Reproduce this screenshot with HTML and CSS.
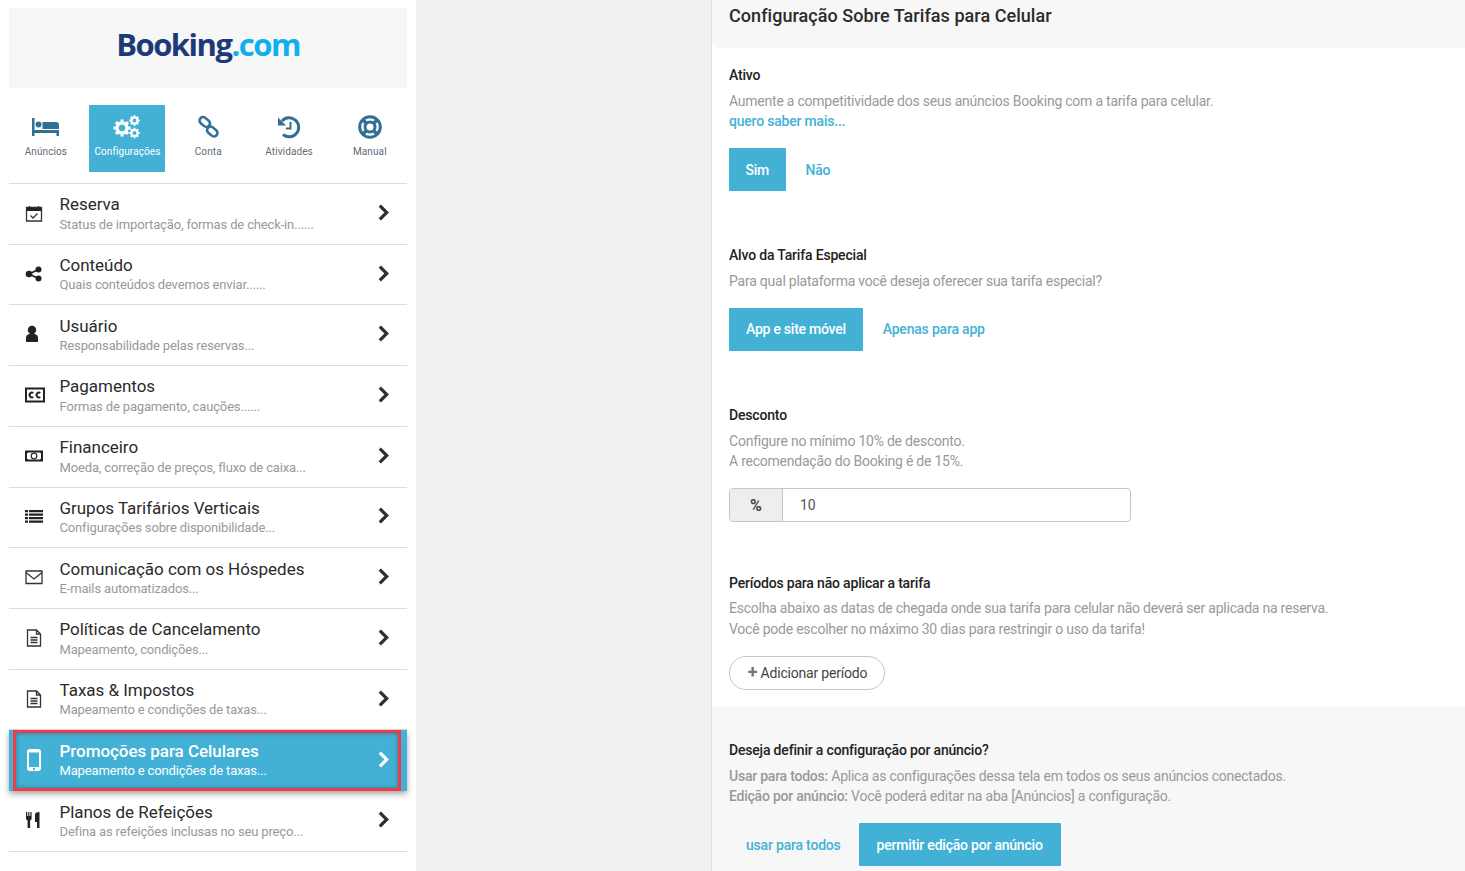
FILE: index.html
```html
<!DOCTYPE html>
<html lang="pt">
<head>
<meta charset="utf-8">
<title>Booking.com</title>
<link rel="stylesheet" href="styles.css">
</head>
<body>
<div class="page">
<aside class="sidebar">
  <div class="logo"><span class="logo-dark">Booking</span><span class="logo-light">.com</span></div>
  <nav class="tabs">
    <a class="tab"><svg class="tab-icon" viewBox="0 0 28 24"><path d="M0 3h2.500v12H27v6h-2.500v-3h-22v3H0z"/><circle cx="6.500" cy="9.500" r="3"/><path d="M10.500 7H24a3 3 0 0 1 3 3v4H10.500z"/></svg><span>Anúncios</span></a>
    <a class="tab tab-active"><svg class="tab-icon" viewBox="0 0 28 24"><g transform="translate(9 13)"><circle class="ring-w" r="5"/><path class="teeth-w" d="M0-8.500V8.500M-8.500 0H8.500M-6-6L6 6M-6 6L6-6"/></g><g transform="translate(21.500 5.500)"><circle class="ring-w ring-s" r="3"/><path class="teeth-w teeth-s" d="M0-5.300V5.300M-5.300 0H5.300M-3.700-3.700L3.700 3.700M-3.700 3.700L3.700-3.700"/></g><g transform="translate(21.500 18)"><circle class="ring-w ring-s" r="3"/><path class="teeth-w teeth-s" d="M0-5.300V5.300M-5.300 0H5.300M-3.700-3.700L3.700 3.700M-3.700 3.700L3.700-3.700"/></g></svg><span>Configurações</span></a>
    <a class="tab"><svg class="tab-icon" viewBox="0 0 28 24"><rect class="stroke-link" x="5" y="3.500" width="11.500" height="7" rx="3.500" transform="rotate(40 10.750 7)"/><rect class="stroke-link" x="12.500" y="13" width="11.500" height="7" rx="3.500" transform="rotate(40 18.250 16.500)"/></svg><span>Conta</span></a>
    <a class="tab"><svg class="tab-icon" viewBox="0 0 28 24"><path class="stroke-blue" d="M7 6A9.500 9.500 0 1 1 8 19.500"/><path d="M3 2.500l8 8H3z"/><path class="stroke-thin" d="M15.500 7v6.500H11"/></svg><span>Atividades</span></a>
    <a class="tab"><svg class="tab-icon" viewBox="0 0 28 24"><circle class="stroke-blue" cx="14" cy="12" r="10.300"/><circle class="stroke-blue" cx="14" cy="12" r="5"/><path class="stroke-wide" d="M6.500 4.500L10.500 8.500M21.500 4.500L17.500 8.500M6.500 19.500L10.500 15.500M21.500 19.500L17.500 15.500"/></svg><span>Manual</span></a>
  </nav>
  <ul class="menu">
    <li class="row"><svg class="row-icon" viewBox="0 0 18 18"><path class="outline" d="M1.500 3.500h15v13.500h-15zM4.500 2v3M13.500 2v3M5.500 11.500l2.500 2.500 4.500-4.500"/><path d="M1.500 3.500h15v3.500h-15z"/></svg><div class="row-text"><div class="row-title">Reserva</div><div class="row-sub">Status de importação, formas de check-in......</div></div><svg class="chev" viewBox="0 0 10 16"><path d="M2 1.500l6.500 6.500-6.500 6.500"/></svg></li>
    <li class="row"><svg class="row-icon" viewBox="0 0 18 18"><circle cx="4" cy="9" r="3.300"/><circle cx="13.500" cy="4.500" r="3"/><circle cx="13.500" cy="13.500" r="3"/><path class="thick" d="M4 9l9.500-4.500M4 9l9.500 4.500"/></svg><div class="row-text"><div class="row-title">Conteúdo</div><div class="row-sub">Quais conteúdos devemos enviar......</div></div><svg class="chev" viewBox="0 0 10 16"><path d="M2 1.500l6.500 6.500-6.500 6.500"/></svg></li>
    <li class="row"><svg class="row-icon" viewBox="0 0 18 18"><circle cx="7" cy="5" r="4.200"/><path d="M1 16.500v-3.500a4 4 0 0 1 3.500-4h5a4 4 0 0 1 3.500 4v3.500a1 1 0 0 1-1 .5H2a1 1 0 0 1-1-.5z"/></svg><div class="row-text"><div class="row-title">Usuário</div><div class="row-sub">Responsabilidade pelas reservas...</div></div><svg class="chev" viewBox="0 0 10 16"><path d="M2 1.500l6.500 6.500-6.500 6.500"/></svg></li>
    <li class="row"><svg class="row-icon cc" viewBox="0 0 20 16"><path class="outline-bold" d="M1 1.500h18v13H1z"/><path class="outline-cc" d="M8.300 6A2.400 2.400 0 1 0 8.300 10M15.300 6a2.400 2.400 0 1 0 0 4"/></svg><div class="row-text"><div class="row-title">Pagamentos</div><div class="row-sub">Formas de pagamento, cauções......</div></div><svg class="chev" viewBox="0 0 10 16"><path d="M2 1.500l6.500 6.500-6.500 6.500"/></svg></li>
    <li class="row"><svg class="row-icon" viewBox="0 0 18 18"><path class="outline-bold" d="M1 4.500h16v9H1z"/><circle class="outline" cx="9" cy="9" r="2.800"/><path d="M1 4h3.500L1 7.500zM17 4h-3.500L17 7.500zM1 14h3.500L1 10.500zM17 14h-3.500l3.500-3.500z"/></svg><div class="row-text"><div class="row-title">Financeiro</div><div class="row-sub">Moeda, correção de preços, fluxo de caixa...</div></div><svg class="chev" viewBox="0 0 10 16"><path d="M2 1.500l6.500 6.500-6.500 6.500"/></svg></li>
    <li class="row"><svg class="row-icon" viewBox="0 0 18 18"><path d="M0 3h3v2.300H0zM4 3h14v2.300H4zM0 6.500h3v2.300H0zM4 6.500h14v2.300H4zM0 10h3v2.300H0zM4 10h14v2.300H4zM0 13.500h3v2.300H0zM4 13.500h14v2.300H4z"/></svg><div class="row-text"><div class="row-title">Grupos Tarifários Verticais</div><div class="row-sub">Configurações sobre disponibilidade...</div></div><svg class="chev" viewBox="0 0 10 16"><path d="M2 1.500l6.500 6.500-6.500 6.500"/></svg></li>
    <li class="row"><svg class="row-icon" viewBox="0 0 18 18"><path class="outline" d="M1 3h16v12.500H1zM1 4.500l8 6.500 8-6.500"/></svg><div class="row-text"><div class="row-title">Comunicação com os Hóspedes</div><div class="row-sub">E-mails automatizados...</div></div><svg class="chev" viewBox="0 0 10 16"><path d="M2 1.500l6.500 6.500-6.500 6.500"/></svg></li>
    <li class="row"><svg class="row-icon doc" viewBox="0 0 16 18"><path class="outline" d="M1.500 1h9l4 4v12h-13zM10.500 1v4h4M4.500 8.500h7M4.500 11h7M4.500 13.500h7"/></svg><div class="row-text"><div class="row-title">Políticas de Cancelamento</div><div class="row-sub">Mapeamento, condições...</div></div><svg class="chev" viewBox="0 0 10 16"><path d="M2 1.500l6.500 6.500-6.500 6.500"/></svg></li>
    <li class="row"><svg class="row-icon doc" viewBox="0 0 16 18"><path class="outline" d="M1.500 1h9l4 4v12h-13zM10.500 1v4h4M4.500 8.500h7M4.500 11h7M4.500 13.500h7"/></svg><div class="row-text"><div class="row-title">Taxas &amp; Impostos</div><div class="row-sub">Mapeamento e condições de taxas...</div></div><svg class="chev" viewBox="0 0 10 16"><path d="M2 1.500l6.500 6.500-6.500 6.500"/></svg></li>
    <li class="row row-active"><svg class="row-icon phone" viewBox="0 0 14 22"><path fill-rule="evenodd" d="M3 0h8a3 3 0 0 1 3 3v16a3 3 0 0 1-3 3H3a3 3 0 0 1-3-3V3a3 3 0 0 1 3-3zM2 3.500v14.500h10V3.500zM7 18.700a1.200 1.200 0 1 0 0 2.400 1.200 1.200 0 0 0 0-2.400z"/></svg><div class="row-text"><div class="row-title">Promoções para Celulares</div><div class="row-sub">Mapeamento e condições de taxas...</div></div><svg class="chev" viewBox="0 0 10 16"><path d="M2 1.500l6.500 6.500-6.500 6.500"/></svg><span class="highlight"></span></li>
    <li class="row"><svg class="row-icon" viewBox="0 0 16 18"><path d="M0 1h1.200v4h1V1h1.200v4h1V1H5.600v6.500a2 2 0 0 1-1.500 2V17H1.600V9.500A2 2 0 0 1 0 7.500zM9 3.500C9 2 10.500 1 13.500 1v16H11v-6H9z"/></svg><div class="row-text"><div class="row-title">Planos de Refeições</div><div class="row-sub">Defina as refeições inclusas no seu preço...</div></div><svg class="chev" viewBox="0 0 10 16"><path d="M2 1.500l6.500 6.500-6.500 6.500"/></svg></li>
  </ul>
</aside>
<main class="panel">
  <header class="panel-head"><h1>Configuração Sobre Tarifas para Celular</h1></header>
  <section class="block block-ativo">
    <h2>Ativo</h2>
    <p>Aumente a competitividade dos seus anúncios Booking com a tarifa para celular.<br><a class="link">quero saber mais...</a></p>
    <div class="choice"><button class="btn btn-sim">Sim</button><a class="opt">Não</a></div>
  </section>
  <section class="block block-alvo">
    <h2>Alvo da Tarifa Especial</h2>
    <p>Para qual plataforma você deseja oferecer sua tarifa especial?</p>
    <div class="choice"><button class="btn btn-app">App e site móvel</button><a class="opt">Apenas para app</a></div>
  </section>
  <section class="block block-desc">
    <h2>Desconto</h2>
    <p>Configure no mínimo 10% de desconto.<br>A recomendação do Booking é de 15%.</p>
    <div class="input"><span class="addon">%</span><span class="value">10</span></div>
  </section>
  <section class="block block-per">
    <h2>Períodos para não aplicar a tarifa</h2>
    <p>Escolha abaixo as datas de chegada onde sua tarifa para celular não deverá ser aplicada na reserva.<br>Você pode escolher no máximo 30 dias para restringir o uso da tarifa!</p>
    <button class="pill"><span class="plus">+</span> Adicionar período</button>
  </section>
  <section class="foot">
    <h2>Deseja definir a configuração por anúncio?</h2>
    <p><b>Usar para todos:</b> Aplica as configurações dessa tela em todos os seus anúncios conectados.<br><b>Edição por anúncio:</b> Você poderá editar na aba [Anúncios] a configuração.</p>
    <div class="choice choice-foot"><a class="opt">usar para todos</a><button class="btn btn-per">permitir edição por anúncio</button></div>
  </section>
</main>
</div>
</body>
</html>
```
FILE: styles.css
```css
* { box-sizing: border-box; }
html, body { margin: 0; height: 871px; overflow: hidden; }
body { background: #f1f1f1; font-family: Roboto, "Liberation Sans", sans-serif; color: #2b2b2b; }
.page { display: flex; height: 871px; }
.sidebar { width: 416px; background: #fff; padding: 8px 9px 0; flex: none; }
.logo { height: 80px; background: #f7f7f7; display: flex; align-items: center; justify-content: center; font-family: "Open Sans", sans-serif; font-weight: 700; font-size: 31px; letter-spacing: -1.500px; padding-bottom: 8px; }
.logo-dark { color: #1c3a78; }
.logo-light { color: #0db0ec; }
.tabs { display: flex; margin-top: 17px; padding-bottom: 11px; border-bottom: 1px solid #dedede; }
.tab { width: 76px; height: 67px; margin-right: 5px; display: flex; flex-direction: column; align-items: center; font-size: 10px; letter-spacing: .1px; color: #5f6b75; padding-top: 10px; border-radius: 1px; }
.tab + .tab { padding-left: 1.500px; }
.tab:first-child { margin-left: -1px; }
.tab:last-child { margin-right: 0; }
.tab-icon { width: 28px; height: 24px; fill: #336f95; margin-bottom: 7px; flex: none; }
.tab-active { background: #43b1d6; color: #fff; }
.ring-w { fill: none; stroke: #fff; stroke-width: 3.500; }
.ring-s { stroke-width: 2.200; }
.teeth-w { stroke: #fff; stroke-width: 3; stroke-dasharray: 3 11; }
.teeth-s { stroke-width: 2; stroke-dasharray: 2 6.600; }
.stroke-blue { stroke: #336f95; stroke-width: 3; fill: none; }
.stroke-link { stroke: #336f95; stroke-width: 2.600; fill: none; }
.stroke-thin { stroke: #336f95; stroke-width: 2; fill: none; }
.stroke-wide { stroke: #336f95; stroke-width: 3.500; fill: none; }
.menu { list-style: none; margin: 0; padding: 0; }
.row { position: relative; height: 60.720px; border-bottom: 1px solid #dedede; display: flex; align-items: center; padding: 0 18px 0 16px; }
.row-icon { width: 18px; height: 18px; fill: #222; flex: none; margin-bottom: 2px; }
.doc { width: 16px; margin-left: 1px; margin-right: 1px; }
.cc { width: 20px; height: 16px; margin-right: -2px; }
.outline { fill: none; stroke: #333; stroke-width: 1.300; }
.outline-bold { fill: none; stroke: #222; stroke-width: 2; }
.outline-cc { fill: none; stroke: #222; stroke-width: 2; }
.thick { stroke: #222; stroke-width: 1.800; }
.row-text { flex: 1; margin-left: 16.500px; padding-top: 1.600px; }
.row-title { font-size: 17px; line-height: 20px; letter-spacing: -.03px; color: #2b2b2b; margin-top: -.350px; margin-bottom: .350px; }
.row-sub { font-size: 13px; line-height: 20px; letter-spacing: -.15px; color: #999; }
.chev { width: 12px; height: 17px; flex: none; fill: none; stroke: #2b2f36; stroke-width: 3; margin-bottom: 3px; }
.row-active { background: #43b1d6; border-bottom: 0; box-shadow: 0 3px 6px rgba(0,0,0,.35); }
.row-active .row-text { padding-top: 0; }
.row-active .row-title { color: #fff; font-weight: 500; letter-spacing: -.05px; margin-top: 0; margin-bottom: 0; }
.row-active .row-sub { color: #fff; }
.row-active .chev { stroke: #fff; }
.row-active .row-icon { fill: #fff; }
.phone { width: 14px; height: 22px; margin: 0 2px 2px; }
.highlight { position: absolute; left: 4px; right: 6px; top: 0; bottom: 0; border: 3px solid #ee3d48; box-shadow: inset 0 0 5px rgba(0,0,0,.3); }
.panel { margin-left: 295px; flex: 1; background: #fff; border-left: 1px solid #e3e3e3; height: 871px; overflow: hidden; }
.panel-head { height: 48px; background: #f7f7f7; border-bottom-left-radius: 8px; padding: 5px 17px 0; }
h1 { margin: 0; font-size: 18px; line-height: 22px; font-weight: 500; letter-spacing: .05px; color: #2b2b2b; }
h2 { margin: 0; font-size: 14px; line-height: 20px; font-weight: 500; letter-spacing: -.18px; color: #222; }
p { margin: 6px 0 0; font-size: 14px; line-height: 20px; letter-spacing: -.23px; color: #999; }
.block { padding: 0 17px; }
.block-ativo { margin-top: 17px; }
.block-alvo { margin-top: 54px; }
.block-desc { margin-top: 54px; }
.block-per { margin-top: 51px; }
.block-per p { margin-top: 5px; line-height: 21px; }
.link { color: #43b1d6; font-weight: 500; letter-spacing: -.2px; }
.choice { display: flex; align-items: center; margin-top: 17px; }
.btn { height: 43px; border: 0; border-radius: 1px; background: #43b1d6; color: #fff; font: 500 14px Roboto, sans-serif; letter-spacing: -.25px; padding: 0 17px; }
.btn-sim { padding: 0 16.500px; }
.btn-per { padding: 0 18px; letter-spacing: -.22px; }
.opt { color: #43b1d6; font-size: 14px; font-weight: 500; letter-spacing: -.2px; margin-left: 20px; }
.block-alvo .btn, .block-alvo .opt { padding-bottom: 2px; }
.input { display: flex; width: 402px; height: 34px; border: 1px solid #c6c6c6; border-radius: 4px; margin-top: 17px; font-size: 14px; overflow: hidden; }
.addon { width: 53px; background: #eee; border-right: 1px solid #c6c6c6; display: flex; align-items: center; justify-content: center; font-weight: 700; font-size: 16px; color: #444; }
.value { padding: 0 17px; line-height: 32px; color: #555; }
.pill { display: block; height: 34px; width: 156px; margin-top: 16px; background: #fff; border: 1px solid #c6c6c6; border-radius: 17px; color: #444; font: 14px Roboto, sans-serif; letter-spacing: -.2px; padding: 0 0 0 1px; }
.plus { color: #777; font-weight: 700; font-size: 18px; line-height: 14px; }
.foot { margin-top: 17px; background: #f7f7f7; height: 164px; padding: 33px 17px 0; }
.foot p b { font-weight: 500; }
.choice-foot { margin-top: 17px; }
.choice-foot .opt { margin-left: 17px; margin-right: 18px; }
```
